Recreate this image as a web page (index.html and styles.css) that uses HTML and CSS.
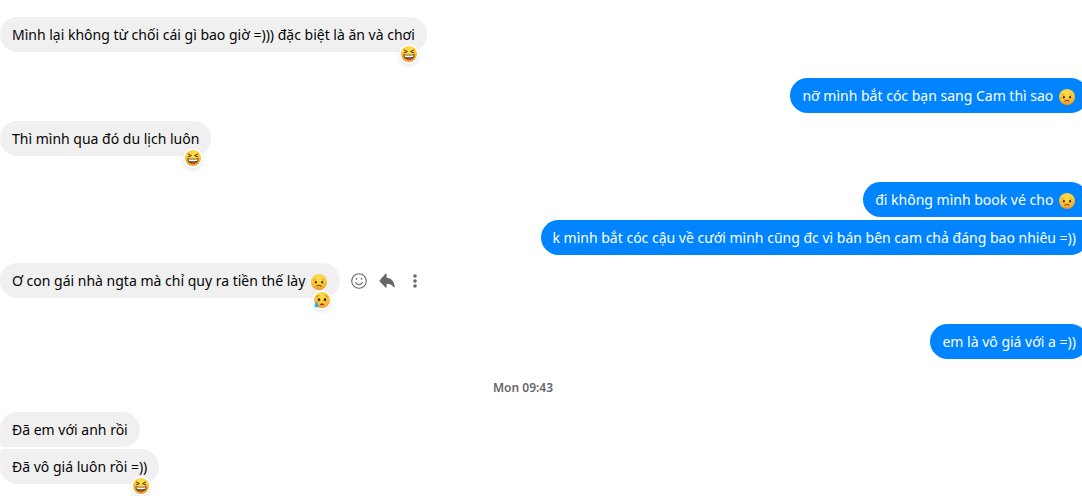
FILE: index.html
```
<!DOCTYPE html>
<html lang="vi">

<head>
    <meta charset="UTF-8">
    <meta name="viewport" content="width=device-width, initial-scale=1.0">
    <title>Chat</title>
    <link rel="stylesheet" href="styles.css">
</head>

<body>
    <!-- emoji shapes, reused below -->
    <svg class="sprite" aria-hidden="true">
        <defs>
            <radialGradient id="face" cx="50%" cy="25%" r="78%">
                <stop offset="0" stop-color="#ffe04f" />
                <stop offset="0.6" stop-color="#fdc536" />
                <stop offset="1" stop-color="#ef8b2c" />
            </radialGradient>
            <symbol id="laugh" viewBox="0 0 16 16">
                <circle cx="8" cy="8" r="8" fill="url(#face)" />
                <path d="M3.400 4 6.400 5.600 3.200 6.800M12.600 4 9.600 5.600 12.800 6.800" fill="none" stroke="#4b3510" stroke-width="1" stroke-linecap="round" stroke-linejoin="round" />
                <path d="M2.400 8.300c3.600.7 7.600.7 11.200 0 .2 3.200-2 5.500-5.600 5.500S2.200 11.500 2.400 8.300z" fill="#5c3b14" />
                <path d="M3.400 9.200c3 .5 6.200.5 9.200 0l-.5 1.700c-2.600.4-5.600.4-8.200 0z" fill="#fff" />
                <path d="M5.400 12.800c1.500-.9 3.700-.9 5.200 0-1.500 1-3.700 1-5.200 0z" fill="#e0563c" />
            </symbol>
            <symbol id="sad" viewBox="0 0 16 16">
                <circle cx="8" cy="8" r="8" fill="url(#face)" />
                <path d="M3.200 6.200c.9-.1 1.700-.5 2.200-1.200M12.800 6.200c-.9-.1-1.700-.5-2.200-1.200" fill="none" stroke="#c98a20" stroke-width=".7" stroke-linecap="round" />
                <ellipse cx="4.900" cy="8.300" rx="1.100" ry="1.200" fill="#4b3510" />
                <ellipse cx="11.100" cy="8.300" rx="1.100" ry="1.200" fill="#4b3510" />
                <path d="M6 12.100c1.100-.9 2.900-.9 4 0" fill="none" stroke="#6b4312" stroke-width="1.100" stroke-linecap="round" />
            </symbol>
            <symbol id="cry" viewBox="0 0 16 16">
                <circle cx="8" cy="8" r="8" fill="url(#face)" />
                <path d="M2.800 5c.8-.3 1.600-.8 2.100-1.600M13.200 5c-.8-.3-1.600-.8-2.100-1.600" fill="none" stroke="#9a6512" stroke-width=".9" stroke-linecap="round" />
                <ellipse cx="5" cy="7.700" rx="1.300" ry="1.600" fill="#4b3510" />
                <ellipse cx="11" cy="7.700" rx="1.300" ry="1.600" fill="#4b3510" />
                <path d="M6.200 12.600c.8-1.300 2.800-1.300 3.600 0z" fill="#4b3510" stroke="#4b3510" stroke-width=".6" />
                <path d="M2.600 9.200c-1.200 2-2 3-2 4.200a2 2 0 0 0 4 0c0-1.200-.8-2.200-2-4.200z" fill="#3ba9ee" />
            </symbol>
        </defs>
    </svg>

    <main class="chat">
        <div class="row has-reaction">
            <div class="bubble">Mình lại không từ chối cái gì bao giờ =))) đặc biệt là ăn và chơi
                <span class="reaction"><svg class="emoji" role="img" aria-label="😆"><use href="#laugh" /></svg></span>
            </div>
        </div>
        <div class="row mine">
            <div class="bubble">nỡ mình bắt cóc bạn sang Cam thì sao <svg class="emoji" role="img" aria-label="😞"><use href="#sad" /></svg></div>
        </div>
        <div class="row has-reaction">
            <div class="bubble">Thì mình qua đó du lịch luôn
                <span class="reaction"><svg class="emoji" role="img" aria-label="😆"><use href="#laugh" /></svg></span>
            </div>
        </div>
        <div class="row mine first">
            <div class="bubble">đi không mình book vé cho <svg class="emoji" role="img" aria-label="😞"><use href="#sad" /></svg></div>
        </div>
        <div class="row mine last">
            <div class="bubble">k mình bắt cóc cậu về cưới mình cũng đc vì bán bên cam chả đáng bao nhiêu =))</div>
        </div>
        <div class="row has-reaction">
            <div class="bubble">Ơ con gái nhà ngta mà chỉ quy ra tiền thế lày <svg class="emoji" role="img" aria-label="😞"><use href="#sad" /></svg>
                <span class="reaction"><svg class="emoji" role="img" aria-label="😢"><use href="#cry" /></svg></span>
            </div>
            <div class="actions">
                <button type="button" aria-label="React">
                    <svg viewBox="0 0 16 16" fill="none" stroke="#65676b">
                        <circle cx="8" cy="8" r="7.300" stroke-width="1.100" />
                        <path d="M4.700 9.600c.6 1.300 1.800 2.100 3.300 2.100s2.700-.8 3.300-2.100" stroke-width="1.100" stroke-linecap="round" />
                        <circle cx="5.500" cy="5.800" r=".9" fill="#65676b" stroke="none" />
                        <circle cx="10.500" cy="5.800" r=".9" fill="#65676b" stroke="none" />
                    </svg>
                </button>
                <button type="button" aria-label="Reply">
                    <svg viewBox="0 0 16 16" fill="#65676b">
                        <path d="M7.600 1.300v3.500c4.600.2 7.700 3.500 8 9.100 0 .7-.5.900-.9.400-1.700-2.400-3.800-3.500-7.100-3.500v3.300c0 .7-.6.900-1.100.5L.7 8.600c-.4-.4-.4-.9 0-1.300L6.500.8c.5-.4 1.100-.2 1.100.5z" />
                    </svg>
                </button>
                <button type="button" aria-label="More">
                    <svg viewBox="0 0 16 16" fill="#65676b">
                        <circle cx="8" cy="3" r="1.800" />
                        <circle cx="8" cy="8" r="1.800" />
                        <circle cx="8" cy="13" r="1.800" />
                    </svg>
                </button>
            </div>
        </div>
        <div class="row mine">
            <div class="bubble">em là vô giá với a =))</div>
        </div>
        <time class="date">Mon 09:43</time>
        <div class="row first">
            <div class="bubble">Đã em với anh rồi</div>
        </div>
        <div class="row last has-reaction">
            <div class="bubble">Đã vô giá luôn rồi =))
                <span class="reaction"><svg class="emoji" role="img" aria-label="😆"><use href="#laugh" /></svg></span>
            </div>
        </div>
    </main>
</body>

</html>
```
FILE: styles.css
```
:root {
    --grey: #f0f0f0;
    --blue: #0084ff;
    --icon: #65676b;
    --radius: 18px;
}

body {
    margin: 0;
    background: #fff;
    color: #050505;
    font-family: "Segoe UI", "Noto Sans", sans-serif;
    font-size: 14px;
    line-height: 19px;
    overflow: hidden;
}

.sprite {
    position: absolute;
    width: 0;
    height: 0;
}

/* the thread runs a little past the right edge of the window */
.chat {
    display: flex;
    flex-direction: column;
    margin-right: -6px;
    padding-top: 17px;
}

.row {
    display: flex;
    align-items: center;
    margin-bottom: 8px;
}

.row.has-reaction {
    margin-bottom: 26px;
}

.row.first {
    margin-bottom: 2px;
}

.row.mine.first {
    margin-bottom: 3px;
}

.mine {
    justify-content: flex-end;
}

.bubble {
    position: relative;
    padding: 8px 12px;
    border-radius: var(--radius);
    background: var(--grey);
    white-space: nowrap;
}

.mine .bubble {
    background: var(--blue);
    color: #fff;
}

.first .bubble {
    border-bottom-left-radius: 4px;
}

.last .bubble {
    border-top-left-radius: 4px;
}

.mine.first .bubble {
    border-radius: var(--radius) var(--radius) 4px var(--radius);
}

.mine.last .bubble {
    border-radius: var(--radius) 4px var(--radius) var(--radius);
}

.emoji {
    width: 16px;
    height: 16px;
    margin: 0 1px 0 2px;
    vertical-align: -4px;
}

.reaction {
    position: absolute;
    right: 8px;
    bottom: -12px;
    display: flex;
    padding: 2px;
    border-radius: 50%;
    background: #fff;
    box-shadow: 0 2px 4px rgba(0, 0, 0, 0.1);
}

.reaction .emoji {
    margin: 0;
}

.actions {
    display: flex;
    gap: 12px;
    margin-left: 11px;
}

.actions button {
    display: flex;
    padding: 0;
    border: none;
    background: none;
    cursor: pointer;
}

.actions svg {
    width: 16px;
    height: 16px;
}

.date {
    margin: 11px 42px 15px 0;
    text-align: center;
    font-size: 12px;
    font-weight: 600;
    color: var(--icon);
}
```
